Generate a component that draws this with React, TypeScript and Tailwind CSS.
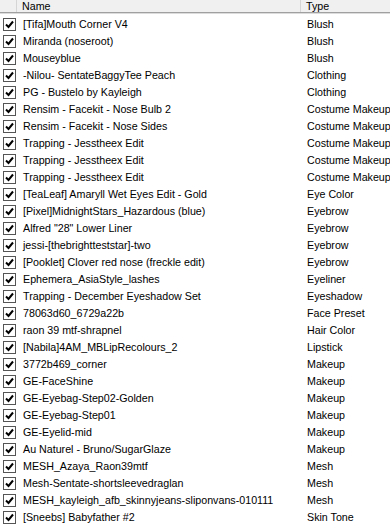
const rows: [string, string][] = [
  ["[Tifa]Mouth Corner V4", "Blush"],
  ["Miranda (noseroot)", "Blush"],
  ["Mouseyblue", "Blush"],
  ["-Nilou- SentateBaggyTee Peach", "Clothing"],
  ["PG - Bustelo by Kayleigh", "Clothing"],
  ["Rensim - Facekit - Nose Bulb 2", "Costume Makeup"],
  ["Rensim - Facekit - Nose Sides", "Costume Makeup"],
  ["Trapping - Jesstheex Edit", "Costume Makeup"],
  ["Trapping - Jesstheex Edit", "Costume Makeup"],
  ["Trapping - Jesstheex Edit", "Costume Makeup"],
  ["[TeaLeaf] Amaryll Wet Eyes Edit - Gold", "Eye Color"],
  ["[Pixel]MidnightStars_Hazardous (blue)", "Eyebrow"],
  ['Alfred "28" Lower Liner', "Eyebrow"],
  ["jessi-[thebrightteststar]-two", "Eyebrow"],
  ["[Pooklet] Clover red nose (freckle edit)", "Eyebrow"],
  ["Ephemera_AsiaStyle_lashes", "Eyeliner"],
  ["Trapping - December Eyeshadow Set", "Eyeshadow"],
  ["78063d60_6729a22b", "Face Preset"],
  ["raon 39 mtf-shrapnel", "Hair Color"],
  ["[Nabila]4AM_MBLipRecolours_2", "Lipstick"],
  ["3772b469_corner", "Makeup"],
  ["GE-FaceShine", "Makeup"],
  ["GE-Eyebag-Step02-Golden", "Makeup"],
  ["GE-Eyebag-Step01", "Makeup"],
  ["GE-Eyelid-mid", "Makeup"],
  ["Au Naturel - Bruno/SugarGlaze", "Makeup"],
  ["MESH_Azaya_Raon39mtf", "Mesh"],
  ["Mesh-Sentate-shortsleevedraglan", "Mesh"],
  ["MESH_kayleigh_afb_skinnyjeans-sliponvans-010111", "Mesh"],
  ["[Sneebs] Babyfather #2", "Skin Tone"],
];

function Check() {
  return (
    <div className="w-[13px] h-[13px] border border-[#555] bg-white flex items-center justify-center">
      <svg width="9" height="9" viewBox="0 0 9 9">
        <path d="M1 4.5 L3.5 7 L8 1.5" fill="none" stroke="#000" strokeWidth="2" />
      </svg>
    </div>
  );
}

export default function App() {
  return (
    <div
      className="w-[390px] h-[527px] overflow-hidden bg-white text-black text-[10.7px]"
      style={{ fontFamily: '"Liberation Sans", Arial, sans-serif' }}
    >
      {/* header */}
      <div className="flex h-[13px] bg-[#f0f0f0] border-b border-[#a0a0a0] shadow-[0_1px_0_#dcdcdc] leading-[13px] overflow-hidden">
        <div className="w-[17px] shrink-0 border-r border-[#d5d5d5]" />
        <div className="w-[284px] shrink-0 border-r border-[#d5d5d5] pl-[5px]">Name</div>
        <div className="flex-1 pl-[5px]">Type</div>
      </div>

      {/* rows */}
      <div className="pt-[3px]">
        {rows.map(([name, type], i) => (
          <div key={i} className="flex h-[17px] items-center leading-[17px] whitespace-nowrap">
            <div className="w-[17px] shrink-0 pl-[3px]">
              <Check />
            </div>
            <div className="w-[284px] shrink-0 pl-[6px] overflow-hidden">{name}</div>
            <div className="flex-1 pl-[6px] overflow-hidden">{type}</div>
          </div>
        ))}
      </div>
    </div>
  );
}
